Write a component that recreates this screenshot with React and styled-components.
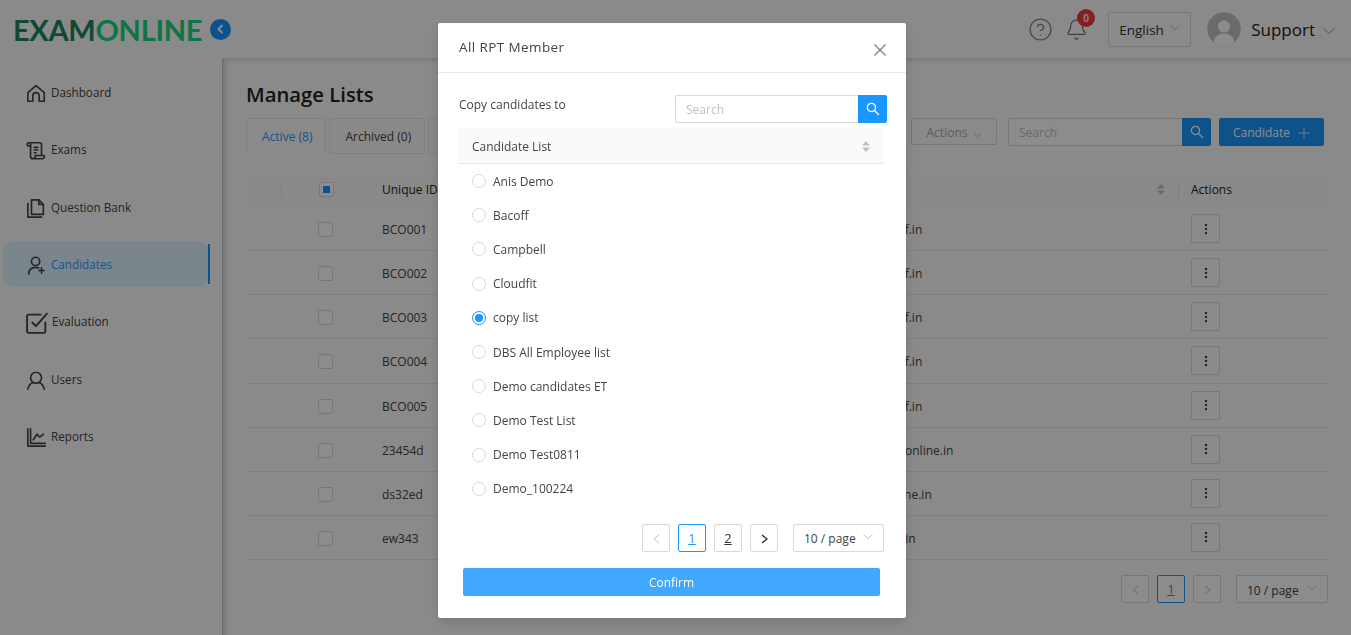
import styled, { createGlobalStyle } from "styled-components";
import { CircleHelp, Bell, Plus, EllipsisVertical } from "lucide-react";
import { AiOutlineSearch, AiOutlineClose } from "react-icons/ai";

const Global = createGlobalStyle`
  html, body { margin: 0; padding: 0; height: 100%; overflow: hidden; }
  body { font-family: "Open Sans", "Noto Sans", sans-serif; font-size: 12px; color: #333; background: #fff; }
  * { box-sizing: border-box; }
`;

const Page = styled.div`
  height: 635px;
  display: flex;
  flex-direction: column;
  background: #fbfbfb;
`;

const Header = styled.header`
  height: 58px;
  flex: none;
  display: flex;
  align-items: center;
  padding: 0 16px 0 13px;
`;

const Logo = styled.div`
  font-family: "Lato", sans-serif;
  font-size: 29px;
  font-weight: 700;
  line-height: 1;
  color: #18d680;
  letter-spacing: -0.3px;
  span { color: #1b885b; }
`;

const Collapse = styled.button`
  width: 21px;
  height: 21px;
  margin-left: 8px;
  padding: 0;
  border: 0;
  border-radius: 50%;
  background: #1a96ff;
  display: flex;
  align-items: center;
  justify-content: center;
`;

const Chevron = styled.svg`
  width: ${(p) => p.$width}px;
  height: ${(p) => p.$width / 2}px;
  flex: none;
  fill: none;
  stroke: ${(p) => p.$color ?? "#bbb"};
  stroke-width: 1;
`;

const Arrow = styled.svg`
  width: 7px;
  height: 10px;
  fill: none;
  stroke: currentColor;
  stroke-width: ${(p) => p.$weight ?? 1};
`;

const HeaderRight = styled.div`
  margin-left: auto;
  display: flex;
  align-items: center;
`;

const BellWrap = styled.div`
  position: relative;
  width: 23px;
  height: 23px;
  margin: 0 0 0 12px;
  color: #777;
`;

const Badge = styled.span`
  position: absolute;
  top: -9px;
  left: 12px;
  width: 18px;
  height: 18px;
  border-radius: 50%;
  background: #f0393c;
  color: #fff;
  font-size: 10px;
  font-weight: 600;
  display: flex;
  align-items: center;
  justify-content: center;
`;

const LangSelect = styled.div`
  width: 83px;
  height: 35px;
  margin-left: 20px;
  border: 1px solid #d9d9d9;
  border-radius: 2px;
  display: flex;
  align-items: center;
  padding: 1px 0 0 10px;
  gap: 6px;
  font-size: 13.5px;
  color: #333;
  svg { margin-top: -5px; }
`;

const Avatar = styled.div`
  width: 34px;
  height: 34px;
  margin-left: 16px;
  border-radius: 50%;
  overflow: hidden;
`;

const UserName = styled.div`
  margin-left: 10px;
  font-size: 17px;
  color: #222;
  display: flex;
  align-items: center;
  gap: 8px;
  svg { margin-top: 4px; }
`;

const Body = styled.div`
  flex: 1;
  display: flex;
  min-height: 0;
`;

const Sidebar = styled.nav`
  width: 222px;
  flex: none;
  padding: 11px 12px 0 3px;
  display: flex;
  flex-direction: column;
  gap: 11.33px;
`;

const NavItem = styled.a`
  position: relative;
  height: 46px;
  flex: none;
  display: flex;
  align-items: center;
  gap: ${(p) => (p.$large ? 3 : 4)}px;
  padding: 0 0 0 ${(p) => (p.$large ? 22 : 23)}px;
  border-radius: 12px;
  font-size: 11.7px;
  color: ${(p) => (p.$active ? "#2b97ff" : "#444")};
  background: ${(p) => (p.$active ? "#e0f4ff" : "transparent")};
  &::after {
    content: "";
    display: ${(p) => (p.$active ? "block" : "none")};
    position: absolute;
    top: 3px;
    bottom: 3px;
    right: 0;
    width: 2px;
    background: #1a96ff;
  }
`;

const NavIcon = styled.svg`
  width: ${(p) => (p.$large ? 24 : 21)}px;
  height: ${(p) => (p.$large ? 24 : 21)}px;
  margin-top: 3px;
  flex: none;
  fill: none;
  stroke: #444;
  stroke-width: 1.8;
  stroke-linecap: round;
  stroke-linejoin: round;
`;

const Main = styled.main`
  flex: 1;
  min-width: 0;
  border-top: 1px solid #dcdcdc;
  border-left: 1px solid #c4c8cc;
  box-shadow: inset 5px 3px 6px -3px rgba(0, 0, 0, 0.18);
  padding: 20px 23px 0 23px;
`;

const Title = styled.h1`
  margin: 0;
  font-size: 20.3px;
  line-height: 30px;
  font-weight: 600;
  color: #222;
`;

const Toolbar = styled.div`
  margin-top: 9px;
  display: flex;
  align-items: flex-start;
  justify-content: space-between;
  padding-right: 4px;
`;

const Tabs = styled.div`
  display: flex;
  gap: 3px;
`;

const Tab = styled.div`
  height: 36px;
  min-width: ${(p) => p.$min ?? 0}px;
  padding: 0 13px 0 15px;
  display: flex;
  align-items: center;
  border: 1px solid #e8e8e8;
  border-bottom-color: ${(p) => (p.$active ? "transparent" : "#e8e8e8")};
  border-radius: 2px 2px 0 0;
  color: ${(p) => (p.$active ? "#2b97ff" : "#444")};
  background: ${(p) => (p.$active ? "#fbfbfb" : "#fafafa")};
`;

const Tools = styled.div`
  display: flex;
  align-items: flex-start;
`;

const ActionsButton = styled.div`
  width: 86px;
  height: 27px;
  margin-right: 11px;
  border: 1px solid #d9d9d9;
  border-radius: 2px;
  color: #aaa;
  display: flex;
  align-items: center;
  justify-content: center;
  gap: 6px;
  span { margin-top: 1px; }
  svg { margin-top: 6px; }
`;

const SearchBox = styled.div`
  display: flex;
  width: ${(p) => p.$width}px;
  height: 28px;
`;

const SearchInput = styled.div`
  flex: 1;
  border: 1px solid #d9d9d9;
  border-right: 0;
  border-radius: 2px 0 0 2px;
  padding-left: 10px;
  display: flex;
  align-items: center;
  color: #bfbfbf;
  background: #fff;
`;

const SearchButton = styled.div`
  width: 29px;
  flex: none;
  background: #1a96ff;
  border-radius: 0 2px 2px 0;
  color: #fff;
  display: flex;
  align-items: center;
  justify-content: center;
`;

const PrimaryButton = styled.div`
  width: 105px;
  height: 28px;
  margin-left: 8px;
  padding-left: 14px;
  background: #1a96ff;
  border-radius: 2px;
  color: #fff;
  display: flex;
  align-items: center;
  gap: 5px;
  svg { margin-top: 2px; }
`;

const TableGrid = styled.div`
  margin-top: 19px;
`;

const rowColumns = "35px 89px 440px 368px 150px";

const HeadRow = styled.div`
  display: grid;
  grid-template-columns: ${rowColumns};
  height: 34px;
  align-items: center;
  background: #fafafa;
  border-bottom: 1px solid #eee;
  font-weight: 500;
  color: #222;
`;

const Row = styled.div`
  display: grid;
  grid-template-columns: ${rowColumns};
  height: 44.125px;
  align-items: center;
  border-bottom: 1px solid #e8e8e8;
  color: #444;
`;

const Cell = styled.div`
  padding-left: ${(p) => p.$pad ?? 12}px;
  padding-top: 2px;
  display: flex;
  align-items: center;
  justify-content: ${(p) => (p.$center ? "center" : "flex-start")};
  white-space: nowrap;
  height: 100%;
`;

const HeadCell = styled(Cell)`
  height: 17px;
  padding-top: 0;
  border-left: ${(p) => (p.$divider ? "1px solid #e4e4e4" : "0")};
  justify-content: ${(p) => (p.$center ? "center" : p.$end ? "flex-end" : "flex-start")};
  padding-right: ${(p) => (p.$end ? "13px" : "0")};
`;

const Check = styled.span`
  width: 15px;
  height: 15px;
  border: 1px solid #d9d9d9;
  border-radius: 2px;
  background: #fff;
  display: flex;
  align-items: center;
  justify-content: center;
  &::after {
    content: "";
    width: 7px;
    height: 7px;
    background: ${(p) => (p.$partial ? "#1a96ff" : "transparent")};
  }
`;

const Dots = styled.div`
  width: 29px;
  height: 29px;
  margin: -2px 0 0 1px;
  border: 1px solid #d9d9d9;
  border-radius: 2px;
  color: #333;
  display: flex;
  align-items: center;
  justify-content: center;
`;

const SortIcon = styled.svg`
  width: 8px;
  height: 11px;
  fill: #bfbfbf;
  flex: none;
`;

const Pager = styled.div`
  display: flex;
  justify-content: flex-end;
  align-items: center;
  margin-top: ${(p) => p.$top}px;
`;

const PageBtn = styled.div`
  width: 28px;
  height: 28px;
  margin-right: ${(p) => (p.$last ? 0 : 8)}px;
  border: 1px solid ${(p) => (p.$active ? "#1a96ff" : "#d9d9d9")};
  border-radius: 2px;
  color: ${(p) => (p.$active ? "#1a96ff" : p.$muted ? "#bfbfbf" : "#333")};
  background: #fff;
  font-size: 13px;
  text-decoration: underline;
  display: flex;
  align-items: center;
  justify-content: center;
  svg { margin-top: 2px; }
`;

const PageSize = styled.div`
  width: ${(p) => p.$width}px;
  height: 28px;
  margin-left: ${(p) => p.$left}px;
  border: 1px solid #d9d9d9;
  border-radius: 2px;
  background: #fff;
  color: #444;
  display: flex;
  align-items: center;
  justify-content: space-between;
  padding: 0 10px 0 10px;
  span { margin-top: 2px; }
  svg { margin-top: -3px; }
`;

const Overlay = styled.div`
  position: fixed;
  inset: 0;
  background: rgba(0, 0, 0, 0.45);
  padding: 23px 0 0 438px;
`;

const Modal = styled.div`
  width: 468px;
  height: 595px;
  background: #fff;
  border-radius: 2px;
  box-shadow: 0 4px 12px rgba(0, 0, 0, 0.15);
  display: flex;
  flex-direction: column;
`;

const ModalHeader = styled.div`
  height: 50px;
  flex: none;
  border-bottom: 1px solid #e8e8e8;
  display: flex;
  align-items: flex-start;
  justify-content: space-between;
  padding: 15px 17px 0 21px;
  font-size: 13.5px;
  font-weight: 500;
  letter-spacing: 0.4px;
  color: #444;
  svg { color: #888; margin-top: 3px; }
`;

const ModalBody = styled.div`
  padding: 22px 22px 0 21px;
`;

const CopyRow = styled.div`
  height: 33px;
  display: flex;
  justify-content: space-between;
  margin-right: -3px;
  color: #444;
  span { line-height: 20px; }
`;

const ListHead = styled.div`
  height: 36px;
  background: #fafafa;
  border-bottom: 1px solid #e8e8e8;
  display: flex;
  align-items: center;
  justify-content: space-between;
  padding: 1px 14px 0 13px;
  font-weight: 500;
  color: #444;
`;

const RadioRow = styled.label`
  height: 34.2px;
  display: flex;
  align-items: center;
  gap: 7px;
  padding-left: 13px;
  color: #444;
`;

const Radio = styled.span`
  width: 14px;
  height: 14px;
  flex: none;
  border-radius: 50%;
  border: 1px solid ${(p) => (p.$checked ? "#1a96ff" : "#d9d9d9")};
  display: flex;
  align-items: center;
  justify-content: center;
  &::after {
    content: "";
    width: 8px;
    height: 8px;
    border-radius: 50%;
    background: ${(p) => (p.$checked ? "#1a96ff" : "transparent")};
  }
`;

const Confirm = styled.div`
  height: 28px;
  margin: 16px 4px 0;
  padding-top: 1px;
  background: #40a9ff;
  border-radius: 2px;
  color: #fff;
  font-weight: 500;
  display: flex;
  align-items: center;
  justify-content: center;
`;

const navItems = [
  { label: "Dashboard", icon: <path d="M2 20v-9.500L11 3l9 7.500V20h-5.500v-6a3.500 3.500 0 0 0-7 0v6z" /> },
  { label: "Exams", icon: <><path d="M3 3h12a2 2 0 0 1 2 2v12" /><path d="M3 3a2 2 0 0 0-1 3.500h3" /><path d="M5 4v14a2.500 2.500 0 0 0 2.500 2.500H18a2.500 2.500 0 0 0 2-3.500H10a2 2 0 0 1-2 3" /><path d="M9 8h4M9 11h4M9 14h2" /></> },
  { label: "Question Bank", icon: <><path d="M6 2h8l5 5v11H6z" /><path d="M14 2v5h5" /><path d="M2 6v15h15" /></> },
  { label: "Candidates", active: true, icon: <><circle cx="10.500" cy="7" r="4.500" /><path d="M3 21c0-5 3-7.500 7.500-7.500 1.500 0 2.500.2 3.500.7" /><path d="M17 14v6M14 17h6" /></> },
  { label: "Evaluation", large: true, icon: <><path d="M19.500 11v8.500a1.500 1.500 0 0 1-1.500 1.500H3.500A1.500 1.500 0 0 1 2 19.500V5a1.500 1.500 0 0 1 1.500-1.500H15" /><path d="M7 11l3.500 3.500L21 2.500" /></> },
  { label: "Users", icon: <><circle cx="11" cy="8.500" r="6" /><path d="M2 21c1-4 3.500-6.500 5-7M20 21c-1-4-3.500-6.500-5-7" /></> },
  { label: "Reports", icon: <><path d="M2 2v19h19" /><path d="M5 2v16h16" /><path d="M8 14l4-6 3 3 4-3" /></> },
];

const rows = [
  ["BCO001", "bco001@bacoff.in"],
  ["BCO002", "bco002@bacoff.in"],
  ["BCO003", "bco003@bacoff.in"],
  ["BCO004", "bco004@bacoff.in"],
  ["BCO005", "bco005@bacoff.in"],
  ["23454d", "user23i@examonline.in"],
  ["ds32ed", "ds3@examonline.in"],
  ["ew343", "ew343@exans.in"],
];

const lists = ["Anis Demo", "Bacoff", "Campbell", "Cloudfit", "copy list", "DBS All Employee list", "Demo candidates ET", "Demo Test List", "Demo Test0811", "Demo_100224"];

function Sort() {
  return (
    <SortIcon viewBox="0 0 8 11">
      <path d="M4 0l4 4.500H0zM4 11L0 6.500h8z" />
    </SortIcon>
  );
}

function Down({ width, color }) {
  return (
    <Chevron viewBox="0 0 12 6" $width={width} $color={color}>
      <path d="M0.500 0.500L6 5.500L11.500 0.500" />
    </Chevron>
  );
}

function Prev() {
  return (
    <Arrow viewBox="0 0 7 10">
      <path d="M6 1L1 5l5 4" />
    </Arrow>
  );
}

function Next({ weight }) {
  return (
    <Arrow viewBox="0 0 7 10" $weight={weight}>
      <path d="M1 1l5 4-5 4" />
    </Arrow>
  );
}

export default function App() {
  return (
    <>
      <Global />
      <Page>
        <Header>
          <Logo><span>EXAM</span>ONLINE</Logo>
          <Collapse>
            <Arrow viewBox="0 0 7 10" $weight={2} style={{ color: "#fff" }}><path d="M5.500 1L1.500 5l4 4" /></Arrow>
          </Collapse>
          <HeaderRight>
            <CircleHelp size={25} color="#888" strokeWidth={1.3} />
            <BellWrap>
              <Bell size={23} strokeWidth={1.3} />
              <Badge>0</Badge>
            </BellWrap>
            <LangSelect>English <Down width={10} /></LangSelect>
            <Avatar>
              <svg viewBox="0 0 34 34" width="34" height="34">
                <circle cx="17" cy="17" r="17" fill="#c4c4c4" />
                <circle cx="17" cy="14.500" r="6" fill="#fff" />
                <ellipse cx="17" cy="29" rx="10" ry="7.500" fill="#fff" />
              </svg>
            </Avatar>
            <UserName>Support <Down width={12} color="#999" /></UserName>
          </HeaderRight>
        </Header>
        <Body>
          <Sidebar>
            {navItems.map((item) => (
              <NavItem key={item.label} $active={item.active} $large={item.large}>
                <NavIcon viewBox="0 0 23 23" $large={item.large}>{item.icon}</NavIcon>
                <span>{item.label}</span>
              </NavItem>
            ))}
          </Sidebar>
          <Main>
            <Title>Manage Lists</Title>
            <Toolbar>
              <Tabs>
                <Tab $active>Active (8)</Tab>
                <Tab>Archived (0)</Tab>
                <Tab $min={70} />
              </Tabs>
              <Tools>
                <ActionsButton><span>Actions</span> <Down width={8} color="#aaa" /></ActionsButton>
                <SearchBox $width={203}>
                  <SearchInput>Search</SearchInput>
                  <SearchButton><AiOutlineSearch size={16} /></SearchButton>
                </SearchBox>
                <PrimaryButton>Candidate <Plus size={18} strokeWidth={1} /></PrimaryButton>
              </Tools>
            </Toolbar>
            <TableGrid>
              <HeadRow>
                <HeadCell />
                <HeadCell $divider $center $pad={0}><Check $partial /></HeadCell>
                <HeadCell>Unique ID</HeadCell>
                <HeadCell $end><Sort /></HeadCell>
                <HeadCell $divider>Actions</HeadCell>
              </HeadRow>
              {rows.map(([id, email]) => (
                <Row key={id}>
                  <Cell />
                  <Cell $center $pad={0}><Check /></Cell>
                  <Cell>{id}</Cell>
                  <Cell>{email}</Cell>
                  <Cell><Dots><EllipsisVertical size={14} /></Dots></Cell>
                </Row>
              ))}
            </TableGrid>
            <Pager $top={15}>
              <PageBtn $muted><Prev /></PageBtn>
              <PageBtn $active>1</PageBtn>
              <PageBtn $muted $last><Next /></PageBtn>
              <PageSize $width={92} $left={15}><span>10 / page</span><Down width={10} /></PageSize>
            </Pager>
          </Main>
        </Body>
      </Page>
      <Overlay>
        <Modal>
          <ModalHeader>
            All RPT Member
            <AiOutlineClose size={18} />
          </ModalHeader>
          <ModalBody>
            <CopyRow>
              <span>Copy candidates to</span>
              <SearchBox $width={212}>
                <SearchInput>Search</SearchInput>
                <SearchButton><AiOutlineSearch size={16} /></SearchButton>
              </SearchBox>
            </CopyRow>
            <ListHead>Candidate List <Sort /></ListHead>
            {lists.map((name) => (
              <RadioRow key={name}>
                <Radio $checked={name === "copy list"} />
                {name}
              </RadioRow>
            ))}
            <Pager $top={18}>
              <PageBtn $muted><Prev /></PageBtn>
              <PageBtn $active>1</PageBtn>
              <PageBtn>2</PageBtn>
              <PageBtn $last><Next weight={1.4} /></PageBtn>
              <PageSize $width={91} $left={15}><span>10 / page</span><Down width={10} /></PageSize>
            </Pager>
            <Confirm>Confirm</Confirm>
          </ModalBody>
        </Modal>
      </Overlay>
    </>
  );
}
